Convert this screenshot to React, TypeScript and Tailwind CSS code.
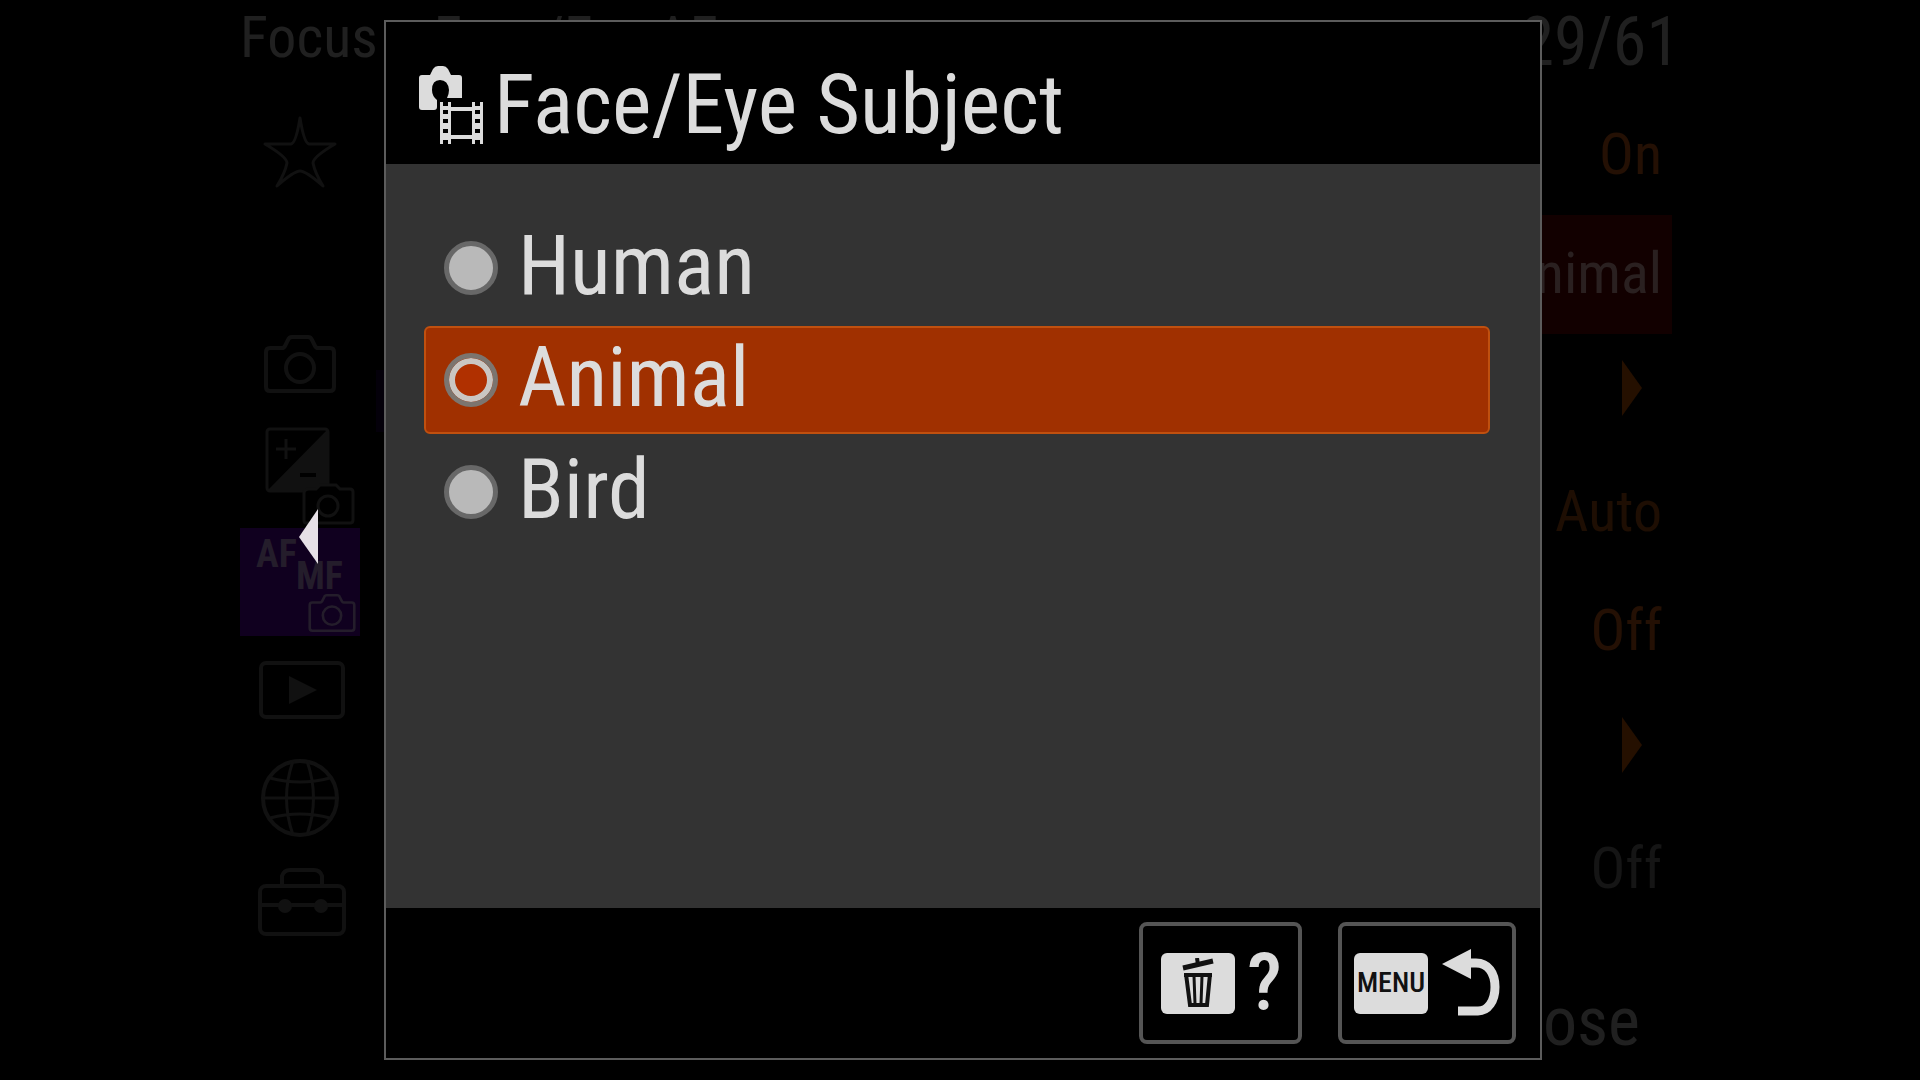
import { useState } from "react";

const FONT = "font-['Roboto_Condensed','Roboto','Liberation_Sans',sans-serif]";

function CameraOutline({ className }: { className: string }) {
  return (
    <svg viewBox="0 0 72 58" fill="none" stroke="currentColor" strokeWidth="4" className={className} aria-hidden="true">
      <path d="M6 13H18Q20 13 21 11L24 5Q25 2 28 2H44Q47 2 48 5L51 11Q52 13 54 13H66Q70 13 70 17V52Q70 56 66 56H6Q2 56 2 52V17Q2 13 6 13Z" />
      <circle cx="36" cy="33" r="14" />
    </svg>
  );
}

function StarIcon() {
  return (
    <svg viewBox="0 0 76 74" fill="none" stroke="currentColor" strokeWidth="3" strokeLinejoin="round" className="mt-1 h-[74px] w-[76px]" aria-hidden="true">
      <path d="M38 3Q42 28 47 29H73Q51 42 51 48Q53 58 61 71Q44 56 38 56Q32 56 15 71Q23 58 25 48Q25 42 3 29H29Q34 28 38 3Z" />
    </svg>
  );
}

function ExposureIcon() {
  return (
    <svg viewBox="0 0 90 98" fill="none" stroke="currentColor" className="mt-1 ml-5 h-[98px] w-[90px]" aria-hidden="true">
      <rect x="2" y="2" width="61" height="62" rx="3" strokeWidth="3" />
      <path d="M63 2V64H2Z" fill="currentColor" stroke="none" />
      <path d="M11 22H31M21 12V32" strokeWidth="3" />
      <path d="M35 48H51" stroke="#000" strokeWidth="4" />
      <path d="M44 62H51L55 58H71L75 62H85Q88 62 88 65V93Q88 96 85 96H41Q39 96 39 93V66Q39 62 44 62Z" fill="#000" strokeWidth="3" />
      <circle cx="63" cy="79" r="10" strokeWidth="3" />
    </svg>
  );
}

function PlayIcon() {
  return (
    <svg viewBox="0 0 86 58" fill="none" stroke="currentColor" strokeWidth="4" className="ml-1 h-[58px] w-[86px]" aria-hidden="true">
      <rect x="2" y="2" width="82" height="54" rx="5" />
      <path d="M30 15L58 29L30 43Z" fill="currentColor" stroke="none" />
    </svg>
  );
}

function GlobeIcon() {
  return (
    <svg viewBox="0 0 80 80" fill="none" stroke="currentColor" strokeWidth="3" className="size-20" aria-hidden="true">
      <circle cx="40" cy="40" r="37" strokeWidth="4" />
      <path d="M3 40H77M10 20Q40 28 70 20M10 60Q40 52 70 60M33 3Q20 40 33 77M47 3Q60 40 47 77" />
    </svg>
  );
}

function ToolboxIcon() {
  return (
    <svg viewBox="0 0 88 68" fill="none" stroke="currentColor" strokeWidth="4" className="mb-2 ml-1 h-[68px] w-[88px]" aria-hidden="true">
      <rect x="2" y="18" width="84" height="48" rx="6" />
      <path d="M24 18V8Q26 2 32 2H56Q62 2 64 8V18M2 37H86" />
      <circle cx="27" cy="38" r="7" fill="currentColor" stroke="none" />
      <circle cx="63" cy="38" r="7" fill="currentColor" stroke="none" />
    </svg>
  );
}

function PhotoMovieIcon() {
  return (
    <svg viewBox="0 0 66 80" className="h-20 w-[66px] shrink-0" aria-hidden="true">
      <path
        fill="#dcdcdc"
        d="M4 10H12L15 4Q17 1 20 1H25Q28 1 30 4L33 10H41Q44 10 44 13V33H29Q31 29 31 25Q30 15 22 15Q14 15 14 25Q14 31 19 35V42Q19 45 16 45H4Q1 45 1 42V13Q1 10 4 10Z"
      />
      <path fill="#dcdcdc" d="M22 37H33V42H54V37H65V79H54V74H33V79H22ZM33 46V70H54V46Z" fillRule="evenodd" />
      <path
        stroke="#000"
        strokeWidth="4"
        d="M25 39H30M25 47H30M25 56H30M25 66H30M25 77H30M57 39H62M57 47H62M57 56H62M57 66H62M57 77H62"
      />
    </svg>
  );
}

function TrashIcon() {
  return (
    <svg viewBox="0 0 34 50" fill="none" stroke="#111" strokeWidth="4" className="h-[50px] w-[34px]" aria-hidden="true">
      <path d="M2 10L32 3" strokeWidth="5" />
      <path d="M17 7L16 0" strokeWidth="4" />
      <path d="M3 17H31" />
      <path d="M5 16L9 47H26L29 16" />
      <path d="M13 18L14 46M21 18L20 46" strokeWidth="3" />
    </svg>
  );
}

function ReturnIcon() {
  return (
    <svg viewBox="0 0 58 68" className="h-[68px] w-[58px]" aria-hidden="true">
      <path d="M0 15L29 0V30Z" fill="#dcdcdc" />
      <path d="M27 14H34C46 14 53 24 53 38C53 52 46 62 36 62H16" fill="none" stroke="#dcdcdc" strokeWidth="9" />
    </svg>
  );
}

function RightTriangle() {
  return (
    <svg viewBox="0 0 20 56" className="mr-5 mb-2 h-14 w-5" aria-hidden="true">
      <path d="M0 0L20 28L0 56Z" fill="#251000" />
    </svg>
  );
}

const tab = "flex h-[108px] w-[120px] items-center justify-center text-[#111111]";
const valueRow = "flex h-[119px] items-center justify-end pr-[10px] pb-1 text-[58px] leading-none";

function MenuBackdrop() {
  return (
    <div className="flex min-h-screen flex-col">
      <header className="flex h-24 items-start justify-between pt-2 pr-60 pl-60 leading-none text-[#202020]">
        <div className="flex gap-14 text-[58px] leading-none">
          <h2>Focus</h2>
          <p>Face/Eye AF</p>
        </div>
        <p className="text-[68px] leading-none">29/61</p>
      </header>
      <div className="flex flex-1 pr-[248px] pl-60">
        <nav aria-label="Menu tabs" className="flex flex-col">
          <button aria-label="My menu" className={tab}><StarIcon /></button>
          <div className="h-[108px]" />
          <button aria-label="Shooting" className={tab}><CameraOutline className="mb-1 h-[58px] w-[72px]" /></button>
          <button aria-label="Exposure" className={tab}><ExposureIcon /></button>
          <button aria-label="Focus" className="flex h-[108px] w-[120px] flex-col bg-[#10001f] pt-2 text-left text-[38px] leading-none font-bold text-[#241d2b]">
            <span className="ml-4 h-5 leading-9">AF</span>
            <span className="ml-14 h-[38px] leading-10">MF</span>
            <CameraOutline className="ml-[68px] h-[38px] w-12" />
          </button>
          <button aria-label="Playback" className={tab}><PlayIcon /></button>
          <button aria-label="Network" className={tab}><GlobeIcon /></button>
          <button aria-label="Setup" className={tab}><ToolboxIcon /></button>
        </nav>
        <div className="mt-[274px] ml-4 h-[62px] w-3 bg-[#04000a]" />
        <ul className="flex-1">
          <li className={`${valueRow} text-[#241004]`}>On</li>
          <li className={`${valueRow} bg-[#120000] text-[#2a2020]`}>Animal</li>
          <li className={valueRow}><RightTriangle /></li>
          <li className={`${valueRow} text-[#1e0e03]`}>Auto</li>
          <li className={`${valueRow} text-[#241004]`}>Off</li>
          <li className={valueRow}><RightTriangle /></li>
          <li className={`${valueRow} text-[#151515]`}>Off</li>
        </ul>
      </div>
      <footer className="flex h-[92px] items-start justify-end pr-[280px] text-[68px] leading-none text-[#202020]">
        <button>Close</button>
      </footer>
    </div>
  );
}

const options = ["Human", "Animal", "Bird"];

export default function App() {
  const [selected, setSelected] = useState("Animal");

  return (
    <main className={`relative min-h-screen overflow-hidden bg-black ${FONT}`}>
      <MenuBackdrop />
      <div className="absolute inset-0 flex items-center gap-[66px] py-5 pr-[378px] pl-[299px]">
        <button aria-label="Back" className="shrink-0 pb-2">
          <svg viewBox="0 0 19 55" className="h-[55px] w-[19px]" aria-hidden="true">
            <path d="M19 0V55L0 28Z" fill="#e6e0e6" />
          </svg>
        </button>
        <section role="dialog" aria-labelledby="dialog-title" className="flex flex-1 flex-col self-stretch border-2 border-[#5c5c5c] bg-black text-[#dcdcdc]">
          <header className="flex h-[142px] items-center gap-[10px] pt-6 pl-8">
            <PhotoMovieIcon />
            <h1 id="dialog-title" className="text-[84px] leading-none">Face/Eye Subject</h1>
          </header>
          <fieldset className="flex flex-1 flex-col gap-1 bg-[#333333] pt-[50px] pr-[50px] pl-[38px]">
            {options.map((option) => (
              <label
                key={option}
                className="flex h-[108px] items-center gap-5 rounded-md border-2 border-transparent pl-[18px] text-[84px] leading-none has-checked:border-[#c0500f] has-checked:bg-[#a03000]"
              >
                <input
                  type="radio"
                  name="subject"
                  value={option}
                  checked={selected === option}
                  onChange={() => setSelected(option)}
                  className="size-[54px] shrink-0 appearance-none rounded-full border-[5px] border-[#686868] bg-[#b9b9b9] checked:border-[#7c756f] checked:bg-[#b03000] checked:inset-ring-6 checked:inset-ring-[#cac6c2]"
                />
                <span className="pb-1">{option}</span>
              </label>
            ))}
          </fieldset>
          <footer className="flex h-[150px] items-start justify-end gap-9 pt-[14px] pr-6">
            <button aria-label="Help" className="flex h-[122px] items-center gap-3 rounded-lg border-4 border-[#555555] pr-4 pl-[18px]">
              <span className="flex h-[61px] w-[74px] items-center justify-center rounded-md bg-[#dcdcdc]"><TrashIcon /></span>
              <span className="text-[80px] leading-none font-medium">?</span>
            </button>
            <button className="flex h-[122px] items-center gap-[14px] rounded-lg border-4 border-[#555555] pr-3 pl-3">
              <span className="flex h-[61px] w-[74px] items-center justify-center rounded-md bg-[#dcdcdc] text-[28px] leading-none font-medium text-[#111111]">MENU</span>
              <ReturnIcon />
            </button>
          </footer>
        </section>
      </div>
    </main>
  );
}
